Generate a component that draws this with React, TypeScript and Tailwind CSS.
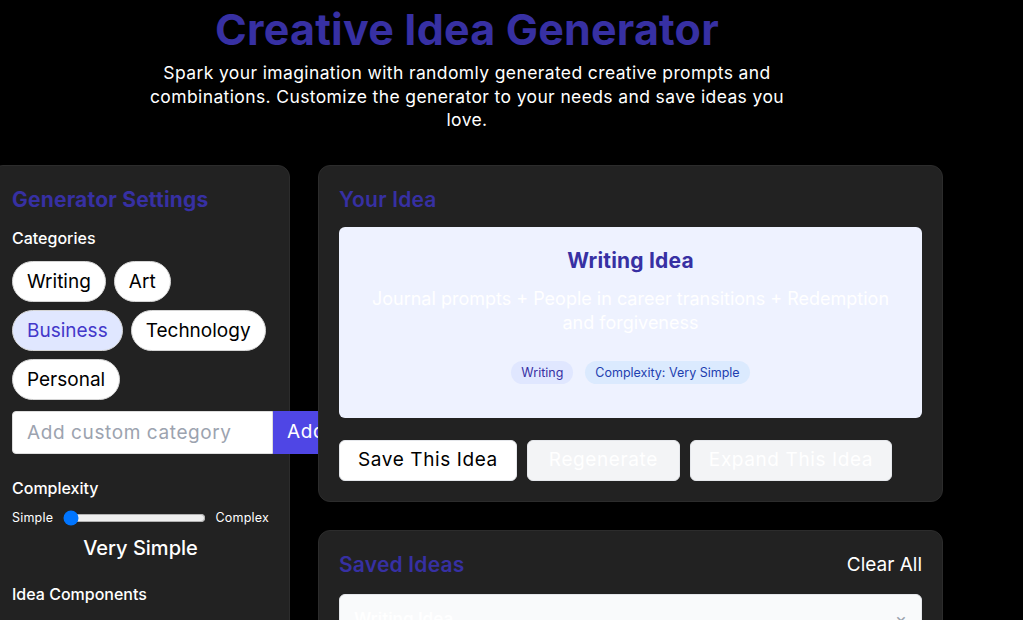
import { useState } from "react";

const categories = ["Writing", "Art", "Business", "Technology", "Personal"];

export default function App() {
  const [selected, setSelected] = useState("Business");
  const [complexity, setComplexity] = useState(0);

  return (
    <div className="min-h-screen bg-black text-white font-['Inter','Noto_Sans',sans-serif] overflow-hidden">
      <div className="w-[952px] ml-[-9px]">
        <header className="text-center pt-[5px]">
          <h1 className="text-[43px] leading-[48px] font-bold tracking-[0.2px] text-[#3730a3]">
            Creative Idea Generator
          </h1>
          <p className="mx-auto mt-[8px] max-w-[640px] text-[17.5px] leading-[23.5px] tracking-[0.38px]">
            Spark your imagination with randomly generated creative prompts and combinations. Customize the generator to your needs and save ideas you love.
          </p>
        </header>

        <div className="mt-[33px] grid grid-cols-[299px_625px] gap-[28px]">
          {/* settings */}
          <aside className="rounded-xl border border-[#2c2c2c] bg-[#222222] p-5 pb-10">
            <h2 className="text-[21px] leading-7 font-bold tracking-[0.2px] text-[#3730a3]">Generator Settings</h2>
            <h3 className="mt-[14px] text-[16px] leading-5 font-medium">Categories</h3>
            <div className="mt-[13px] flex flex-wrap gap-x-2 gap-y-[8px]">
              {categories.map((c) => (
                <button
                  key={c}
                  onClick={() => setSelected(c)}
                  className={`rounded-full border border-[#d4d4d4] px-[14px] py-[7px] text-[19px] leading-[25px] ${
                    selected === c ? "bg-[#e0e7ff] text-[#4338ca]" : "bg-white text-black"
                  }`}
                >
                  {c}
                </button>
              ))}
            </div>
            <div className="mt-[11px] flex">
              <input
                placeholder="Add custom category"
                className="h-[43px] w-[261px] shrink-0 rounded-l border border-[#ddd] bg-white px-[14px] text-[19px] tracking-[0.6px] text-black placeholder:text-[#9ca3af] outline-none"
              />
              <button className="h-[43px] shrink-0 rounded-r bg-[#4f46e5] px-[14px] text-[19px] tracking-[0.6px] text-white">
                Add
              </button>
            </div>

            <h3 className="mt-[24px] text-[16px] leading-5 font-medium">Complexity</h3>
            <div className="mt-[10px] flex items-center gap-[10px] text-[12.5px] leading-5 tracking-[0.2px]">
              <span>Simple</span>
              <input
                type="range"
                min={0}
                max={4}
                value={complexity}
                onChange={(e) => setComplexity(Number(e.target.value))}
                className="w-[144px] m-0"
              />
              <span>Complex</span>
            </div>
            <div className="mt-[6px] text-center text-[20px] leading-7 font-medium">Very Simple</div>

            <h3 className="mt-[22px] text-[16px] leading-5 font-medium">Idea Components</h3>
          </aside>

          {/* idea */}
          <div className="flex flex-col gap-[28px]">
            <section className="rounded-xl border border-[#2c2c2c] bg-[#222222] p-5">
              <h2 className="text-[21px] leading-7 font-semibold tracking-[0.2px] text-[#3730a3]">Your Idea</h2>
              <div className="mt-[13px] h-[191px] rounded-md bg-[#eef2ff] px-6 pt-5 text-center">
                <h3 className="text-[21px] leading-7 font-bold tracking-[0.2px] text-[#3730a3]">Writing Idea</h3>
                <p className="mt-3 text-[18px] leading-6 text-white">
                  Journal prompts + People in career transitions + Redemption and forgiveness
                </p>
                <div className="mt-[26px] flex justify-center gap-3 text-[12.5px] leading-[15px]">
                  <span className="rounded-full bg-[#e0e7ff] px-[10px] py-1 text-[#3730a3]">Writing</span>
                  <span className="rounded-full bg-[#dbeafe] px-[10px] py-1 text-[#1e40af]">Complexity: Very Simple</span>
                </div>
              </div>
              <div className="mt-[22px] flex gap-[10px] text-[19px] tracking-[0.6px]">
                <button className="h-[41px] rounded-md border border-[#e5e7eb] bg-white px-[18px] text-black">
                  Save This Idea
                </button>
                <button className="h-[41px] rounded-md border border-[#e5e7eb] bg-[#f3f4f6] px-[21px] text-white">
                  Regenerate
                </button>
                <button className="h-[41px] rounded-md border border-[#e5e7eb] bg-[#f3f4f6] px-[18px] text-white">
                  Expand This Idea
                </button>
              </div>
            </section>

            <section className="rounded-xl border border-[#2c2c2c] bg-[#222222] p-5">
              <div className="flex items-center justify-between">
                <h2 className="text-[21px] leading-7 font-semibold tracking-[0.2px] text-[#3730a3]">Saved Ideas</h2>
                <button className="text-[19px] leading-7">Clear All</button>
              </div>
              <div className="mt-[15px] flex h-[80px] justify-between rounded-md border border-[#e5e7eb] bg-[#f9fafb] px-[14px] pt-[12px]">
                <span className="text-[17px] font-semibold text-white">Writing Idea</span>
                <span className="text-[18px] leading-[26px] text-[#9ca3af]">×</span>
              </div>
            </section>
          </div>
        </div>
      </div>
    </div>
  );
}
